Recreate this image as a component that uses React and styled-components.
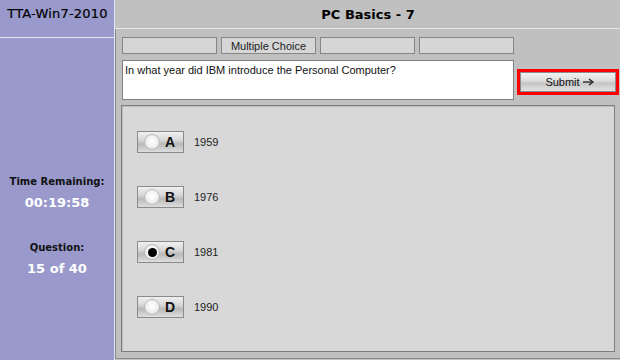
import React from 'react'
import styled, { createGlobalStyle } from 'styled-components'

const GlobalStyle = createGlobalStyle`
  html, body {
    margin: 0;
    padding: 0;
    background: #c0c0c0;
  }
  #root {
    width: 620px;
    height: 360px;
    overflow: hidden;
  }
`

const Screen = styled.div`
  display: flex;
  width: 620px;
  height: 360px;
  font-family: "Liberation Sans", Arial, sans-serif;
`

const Sidebar = styled.aside`
  width: 114px;
  flex-shrink: 0;
  background: #9999cc;
  border-right: 1px solid #e4e4f0;
  display: flex;
  flex-direction: column;
  font-family: "DejaVu Sans", Verdana, sans-serif;
`

const Brand = styled.div`
  height: 38px;
  box-sizing: border-box;
  padding: 0 0 10px 1px;
  border-bottom: 1px solid #e6e6f2;
  display: flex;
  align-items: center;
  justify-content: center;
  font-size: 13px;
  color: #000;
  letter-spacing: 0.2px;
  -webkit-text-stroke: 0.2px #000;
`

const Stat = styled.div`
  display: flex;
  flex-direction: column;
  align-items: center;
  margin-top: ${p => p.$top}px;
`

const StatLabel = styled.div`
  font-size: 10px;
  font-weight: bold;
  color: #111;
`

const StatValue = styled.div`
  font-size: 13px;
  font-weight: bold;
  color: #fff;
  margin-top: 8px;
`

const Main = styled.main`
  flex: 1;
  display: flex;
  flex-direction: column;
  background: #c0c0c0;
`

const Header = styled.header`
  height: 28px;
  border-bottom: 1px solid #e8e8e8;
  display: flex;
  align-items: center;
  justify-content: center;
  font-family: "DejaVu Sans", Verdana, sans-serif;
  font-size: 13px;
  font-weight: bold;
  color: #000;
  padding-right: 2px;
`

const Body = styled.section`
  flex: 1;
  border-left: 1px solid #8a8a8a;
  border-right: 1px solid #8a8a8a;
  border-bottom: 1px solid #8a8a8a;
  margin-right: 2px;
  margin-bottom: 1px;
  padding: 8px 4px 6px 6px;
  display: flex;
  flex-direction: column;
`

const Tabs = styled.div`
  display: grid;
  grid-template-columns: repeat(4, 95px);
  gap: 4px;
  width: 392px;
`

const Tab = styled.div`
  height: 17px;
  box-sizing: border-box;
  background: #d6d6d6;
  border: 1px solid #858585;
  display: flex;
  align-items: center;
  justify-content: center;
  font-size: 11px;
  color: #222;
`

const QuestionRow = styled.div`
  display: flex;
  align-items: flex-start;
  margin-top: 6px;
`

const QuestionBox = styled.div`
  width: 392px;
  height: 40px;
  box-sizing: border-box;
  background: #fff;
  border: 1px solid #808080;
  padding: 3px 2px;
  font-size: 11px;
  color: #111;
`

const SubmitButton = styled.button`
  margin: 12px 0 0 6px;
  width: 96px;
  height: 20px;
  box-sizing: border-box;
  border: 1px solid #8c8c8c;
  outline: 3px solid #ff0000;
  background: linear-gradient(#f2f2f2 0%, #dcdcdc 45%, #c4c4c4 55%, #e2e2e2 100%);
  font-family: "Liberation Sans", Arial, sans-serif;
  font-size: 11px;
  color: #111;
  display: flex;
  align-items: center;
  justify-content: center;
  gap: 3px;
  padding: 0 0 0 4px;
`

const AnswerPanel = styled.div`
  flex: 1;
  margin-top: 5px;
  margin-left: -1px;
  margin-right: 1px;
  background: #d8d8d8;
  border: 1px solid #7e7e7e;
  box-shadow: inset 1px 1px 0 #bdbdbd;
  display: flex;
  flex-direction: column;
  gap: 33px;
  padding: 25px 0 0 15px;
`

const Option = styled.div`
  display: flex;
  align-items: center;
  gap: 10px;
`

const OptionButton = styled.div`
  width: 47px;
  height: 22px;
  box-sizing: border-box;
  border: 1px solid #8a8a8a;
  background: linear-gradient(#f0f0f0 0%, #d8d8d8 40%, #b9b9b9 60%, #dedede 100%);
  display: flex;
  align-items: center;
  padding-left: 6px;
  gap: 5px;
`

const Radio = styled.span`
  width: 16px;
  height: 16px;
  border-radius: 50%;
  box-sizing: border-box;
  border: 1px solid #bcbcbc;
  background: radial-gradient(circle at 50% 45%, #ffffff 0%, #f2f2f2 50%, #cfcfcf 100%);
  display: flex;
  align-items: center;
  justify-content: center;

  &::after {
    content: '';
    width: 9px;
    height: 9px;
    border-radius: 50%;
    background: #000;
    display: ${p => (p.$checked ? 'block' : 'none')};
  }
`

const Letter = styled.span`
  font-size: 14px;
  font-weight: bold;
  color: #111;
`

const Year = styled.span`
  font-size: 11px;
  color: #222;
`

const answers = [
  { letter: 'A', text: '1959' },
  { letter: 'B', text: '1976' },
  { letter: 'C', text: '1981', checked: true },
  { letter: 'D', text: '1990' },
]

const Arrow = () => (
  <svg width="12" height="8" viewBox="0 0 12 8">
    <path d="M0 4h9" stroke="#222" strokeWidth="1.3" />
    <path d="M6 1l4 3-4 3" stroke="#222" strokeWidth="1.3" fill="none" />
  </svg>
)

export default function App() {
  return (
    <>
      <GlobalStyle />
      <Screen>
        <Sidebar>
          <Brand>TTA-Win7-2010</Brand>
          <Stat $top={138}>
            <StatLabel>Time Remaining:</StatLabel>
            <StatValue>00:19:58</StatValue>
          </Stat>
          <Stat $top={32}>
            <StatLabel>Question:</StatLabel>
            <StatValue>15 of 40</StatValue>
          </Stat>
        </Sidebar>
        <Main>
          <Header>PC Basics - 7</Header>
          <Body>
            <Tabs>
              <Tab />
              <Tab>Multiple Choice</Tab>
              <Tab />
              <Tab />
            </Tabs>
            <QuestionRow>
              <QuestionBox>In what year did IBM introduce the Personal Computer?</QuestionBox>
              <SubmitButton>
                Submit <Arrow />
              </SubmitButton>
            </QuestionRow>
            <AnswerPanel>
              {answers.map(a => (
                <Option key={a.letter}>
                  <OptionButton>
                    <Radio $checked={a.checked} />
                    <Letter>{a.letter}</Letter>
                  </OptionButton>
                  <Year>{a.text}</Year>
                </Option>
              ))}
            </AnswerPanel>
          </Body>
        </Main>
      </Screen>
    </>
  )
}
